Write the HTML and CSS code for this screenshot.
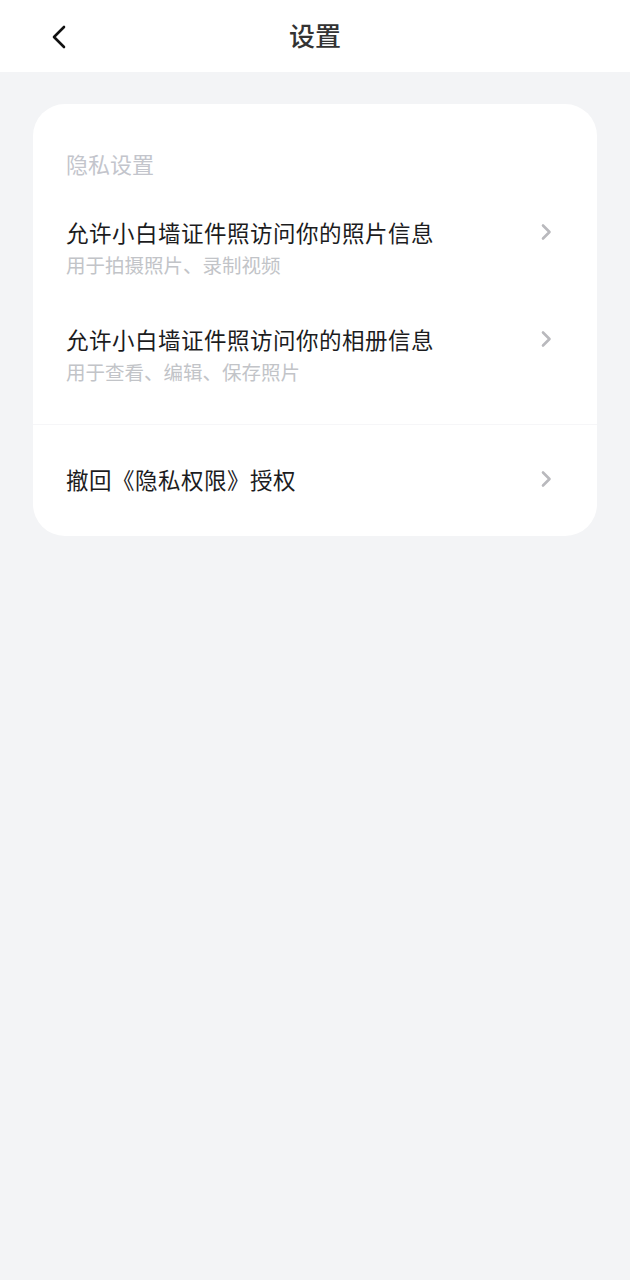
FILE: index.html
```html
<!DOCTYPE html>
<html lang="zh-CN">
<head>
<meta charset="utf-8">
<link rel="stylesheet" href="styles.css">
</head>
<body>
<header class="topbar">
  <span class="back">
    <svg width="16" height="24" viewBox="0 0 16 24"><path d="M13 2 L3 12 L13 22" fill="none" stroke="#111" stroke-width="2.6" stroke-linecap="round" stroke-linejoin="round"/></svg>
  </span>
  <h1 class="title">设置</h1>
</header>
<main class="content">
  <section class="card">
    <div class="group">
      <div class="section-title">隐私设置</div>
      <div class="item">
        <div class="item-text">
          <div class="item-title">允许小白墙证件照访问你的照片信息</div>
          <div class="item-sub">用于拍摄照片、录制视频</div>
        </div>
        <svg class="chev" width="12" height="18" viewBox="0 0 12 18"><path d="M3 2.5 L9.5 9 L3 15.5" fill="none" stroke="#b9b9bd" stroke-width="2.6" stroke-linecap="round" stroke-linejoin="round"/></svg>
      </div>
      <div class="item">
        <div class="item-text">
          <div class="item-title">允许小白墙证件照访问你的相册信息</div>
          <div class="item-sub">用于查看、编辑、保存照片</div>
        </div>
        <svg class="chev" width="12" height="18" viewBox="0 0 12 18"><path d="M3 2.5 L9.5 9 L3 15.5" fill="none" stroke="#b9b9bd" stroke-width="2.6" stroke-linecap="round" stroke-linejoin="round"/></svg>
      </div>
    </div>
    <div class="single">
      <div class="item-title">撤回《隐私权限》授权</div>
      <svg class="chev" width="12" height="18" viewBox="0 0 12 18"><path d="M3 2.5 L9.5 9 L3 15.5" fill="none" stroke="#b9b9bd" stroke-width="2.6" stroke-linecap="round" stroke-linejoin="round"/></svg>
    </div>
  </section>
</main>
</body>
</html>
```
FILE: styles.css
```css
html, body {
  margin: 0;
  padding: 0;
}
body {
  width: 630px;
  min-height: 1280px;
  background: #f3f4f6;
  font-family: "Noto Sans CJK SC", "Noto Sans", sans-serif;
}
.topbar {
  height: 72px;
  box-sizing: border-box;
  padding-bottom: 2px;
  background: #ffffff;
  display: flex;
  align-items: center;
  justify-content: center;
  position: relative;
}
.back {
  position: absolute;
  left: 51px;
  top: 25px;
  width: 16px;
  height: 24px;
  display: block;
}
.back svg { display: block; }
.title {
  margin: 0;
  font-size: 26px;
  font-weight: 500;
  color: #333333;
  line-height: 36px;
}
.content {
  padding: 32px 33px 0 33px;
}
.card {
  background: #ffffff;
  border-radius: 32px;
  overflow: hidden;
}
.group {
  padding: 43px 0 12px 0;
  border-bottom: 1px solid #f6f6f8;
}
.section-title {
  padding-left: 33px;
  font-size: 22px;
  line-height: 32px;
  color: #c3c5cc;
  margin-bottom: 19px;
}
.item {
  height: 107px;
  box-sizing: border-box;
  padding: 18px 45px 0 33px;
  display: flex;
  align-items: flex-start;
  justify-content: space-between;
}
.item-text {
  display: flex;
  flex-direction: column;
  gap: 4px;
}
.item-title {
  font-size: 22.5px;
  line-height: 32px;
  color: #1c1c1e;
  letter-spacing: 0.5px;
}
.item-sub {
  font-size: 19.5px;
  line-height: 26px;
  color: #c2c4c8;
}
.chev {
  display: block;
  margin-top: 7px;
}
.single {
  height: 111px;
  box-sizing: border-box;
  padding: 0 45px 4px 33px;
  display: flex;
  align-items: center;
  justify-content: space-between;
}
.single .chev { margin-top: 0; }
```
